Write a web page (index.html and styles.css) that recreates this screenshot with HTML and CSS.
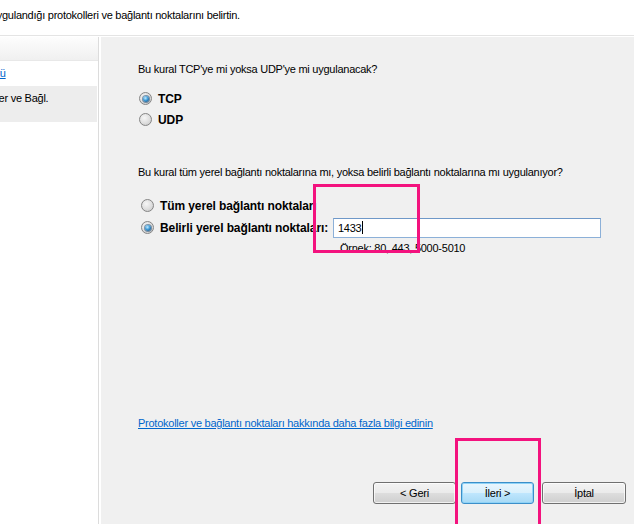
FILE: index.html
```html
<!DOCTYPE html>
<html lang="tr">
<head>
<meta charset="utf-8">
<title>Protokol ve Bağlantı Noktaları</title>
<link rel="stylesheet" href="styles.css">
</head>
<body>
<div class="window">
  <header class="intro">
    <p class="intro-text">Bu kuralın uygulandığı protokolleri ve bağlantı noktalarını belirtin.</p>
  </header>

  <div class="body">
    <aside class="steps">
      <div class="steps-head"></div>
      <ul class="step-list">
        <li class="step"><a class="step-link" href="#">Kural Türü</a></li>
        <li class="step current"><span class="step-label">Protokoller ve Bağl.</span></li>
      </ul>
    </aside>

    <main class="panel">
      <section class="question">
        <p class="prompt">Bu kural TCP'ye mi yoksa UDP'ye mi uygulanacak?</p>
        <div class="options protocol-options">
          <div class="option"><span class="radio checked"></span><span class="option-label">TCP</span></div>
          <div class="option"><span class="radio"></span><span class="option-label">UDP</span></div>
        </div>
      </section>

      <section class="question ports">
        <p class="prompt">Bu kural tüm yerel bağlantı noktalarına mı, yoksa belirli bağlantı noktalarına mı uygulanıyor?</p>
        <div class="options port-options">
          <div class="option"><span class="radio"></span><span class="option-label">Tüm yerel bağlantı noktaları</span></div>
          <div class="option"><span class="radio checked"></span><span class="option-label fixed">Belirli yerel bağlantı noktaları:</span><span class="port-input">1433<span class="caret"></span></span></div>
          <p class="example">Örnek: 80, 443, 5000-5010</p>
        </div>
      </section>

      <a class="help-link" href="#">Protokoller ve bağlantı noktaları hakkında daha fazla bilgi edinin</a>

      <div class="buttons">
        <button class="btn back" type="button">&lt; Geri</button>
        <button class="btn next default" type="button">İleri &gt;</button>
        <button class="btn cancel" type="button">İptal</button>
      </div>
    </main>
  </div>

  <!-- highlight frames drawn over the dialog -->
  <div class="mark mark-port"></div>
  <div class="mark mark-next"></div>
</div>
</body>
</html>
```

FILE: styles.css
```css
html, body {
  margin: 0;
  padding: 0;
}

body {
  font-family: "Liberation Sans", Arial, sans-serif;
  font-size: 11px;
  letter-spacing: -0.25px;
  color: #000;
  background: #ffffff;
}

.window {
  position: relative;
  height: 524px;
  overflow: hidden;
  display: flex;
  flex-direction: column;
}

/* instruction strip */
.intro {
  height: 35px;
  border-bottom: 1px solid #e4e4e4;
  background: #ffffff;
  overflow: hidden;
  flex: none;
}

.intro-text {
  margin: 8px 0 0 -59px;
  line-height: 14px;
  white-space: nowrap;
}

.body {
  flex: 1;
  display: flex;
  padding-top: 1px;
  background: #ffffff;
  min-height: 0;
}

/* steps pane */
.steps {
  width: 99px;
  flex: none;
  box-sizing: border-box;
  border-right: 1px solid #dcdcdc;
  overflow: hidden;
  background: #ffffff;
}

.steps-head {
  height: 23px;
  border-bottom: 1px solid #e8e8e8;
  background: linear-gradient(#fdfdfd, #f0f0f0);
}

.step-list {
  list-style: none;
  margin: 0;
  padding: 0;
}

.step {
  height: 25px;
  line-height: 25px;
  white-space: nowrap;
}

.step-link {
  display: inline-block;
  margin-left: -43px;
  color: #0066cc;
  text-decoration: underline;
}

.step.current {
  height: 36px;
  line-height: 14px;
  padding-top: 5px;
  box-sizing: border-box;
  margin-right: 1px;
  background: #ededed;
}

.step-label {
  display: inline-block;
  margin-left: -42px;
}

/* main page */
.panel {
  flex: 1;
  margin-left: 2px;
  background: #f0f0f0;
  display: flex;
  flex-direction: column;
  padding: 25px 0 0 37px;
  min-width: 0;
}

.prompt {
  margin: 0;
  line-height: 14px;
  white-space: nowrap;
}

.options {
  display: flex;
  flex-direction: column;
}

.protocol-options {
  margin-top: 12px;
  padding-left: 1px;
}

.ports {
  margin-top: 35px;
}

.port-options {
  margin-top: 16px;
  padding-left: 3px;
  gap: 1px;
}

.option {
  height: 21px;
  display: flex;
  align-items: center;
  gap: 6px;
}

.option-label {
  font-weight: bold;
  font-size: 12px;
  letter-spacing: -0.1px;
  white-space: nowrap;
}

.option-label.fixed {
  width: 167px;
}

/* radio buttons */
.radio {
  width: 13px;
  height: 13px;
  flex: none;
  box-sizing: border-box;
  border-radius: 50%;
  border: 1px solid #858585;
  background: radial-gradient(circle at 40% 35%, #f6f6f6 0%, #dedede 55%, #c2c2c2 100%);
  display: flex;
  align-items: center;
  justify-content: center;
}

.radio.checked::after {
  content: "";
  width: 6px;
  height: 6px;
  border-radius: 50%;
  background: radial-gradient(circle at 40% 35%, #c4ecff 0%, #3f9ad6 45%, #0b3b66 100%);
  box-shadow: 0 0 0 1px rgba(20, 60, 100, 0.5);
}

.port-input {
  width: 268px;
  height: 20px;
  box-sizing: border-box;
  border: 1px solid #8cb0d8;
  border-top-color: #6f98c8;
  background: #ffffff;
  padding-left: 4px;
  display: flex;
  align-items: center;
  font-size: 11px;
}

.caret {
  width: 1px;
  height: 13px;
  margin-left: 1px;
  background: #000;
}

.example {
  margin: 2px 0 0 199px;
  line-height: 14px;
}

.help-link {
  margin-top: auto;
  align-self: flex-start;
  line-height: 14px;
  color: #0066cc;
  text-decoration: underline;
  white-space: nowrap;
}

/* wizard buttons */
.buttons {
  display: flex;
  justify-content: flex-end;
  margin-top: 52px;
  margin-bottom: 20px;
  padding-right: 8px;
}

.btn {
  height: 22px;
  box-sizing: border-box;
  border: 1px solid #707070;
  border-radius: 3px;
  padding: 0;
  font-family: inherit;
  font-size: 11px;
  letter-spacing: -0.25px;
  color: #000;
  background: linear-gradient(#f3f3f3 0%, #ebebeb 48%, #dddddd 52%, #cfcfcf 100%);
  box-shadow: inset 0 0 0 1px rgba(255, 255, 255, 0.7);
}

.back {
  width: 83px;
}

.next {
  width: 73px;
  margin-left: 5px;
}

.cancel {
  width: 84px;
  margin-left: 8px;
}

.btn.default {
  border-color: #3c8fc9;
  background: linear-gradient(#eaf6fd 0%, #d9f0fc 48%, #bee6fd 52%, #a7d9f5 100%);
  box-shadow: inset 0 0 0 1px #8fd3f7;
}

/* highlight frames */
.mark {
  position: absolute;
  border: 3px solid #f3127e;
  box-sizing: border-box;
}

.mark-port {
  left: 313px;
  top: 184px;
  width: 107px;
  height: 69px;
}

.mark-next {
  left: 455px;
  top: 438px;
  width: 86px;
  height: 100px;
}
```
